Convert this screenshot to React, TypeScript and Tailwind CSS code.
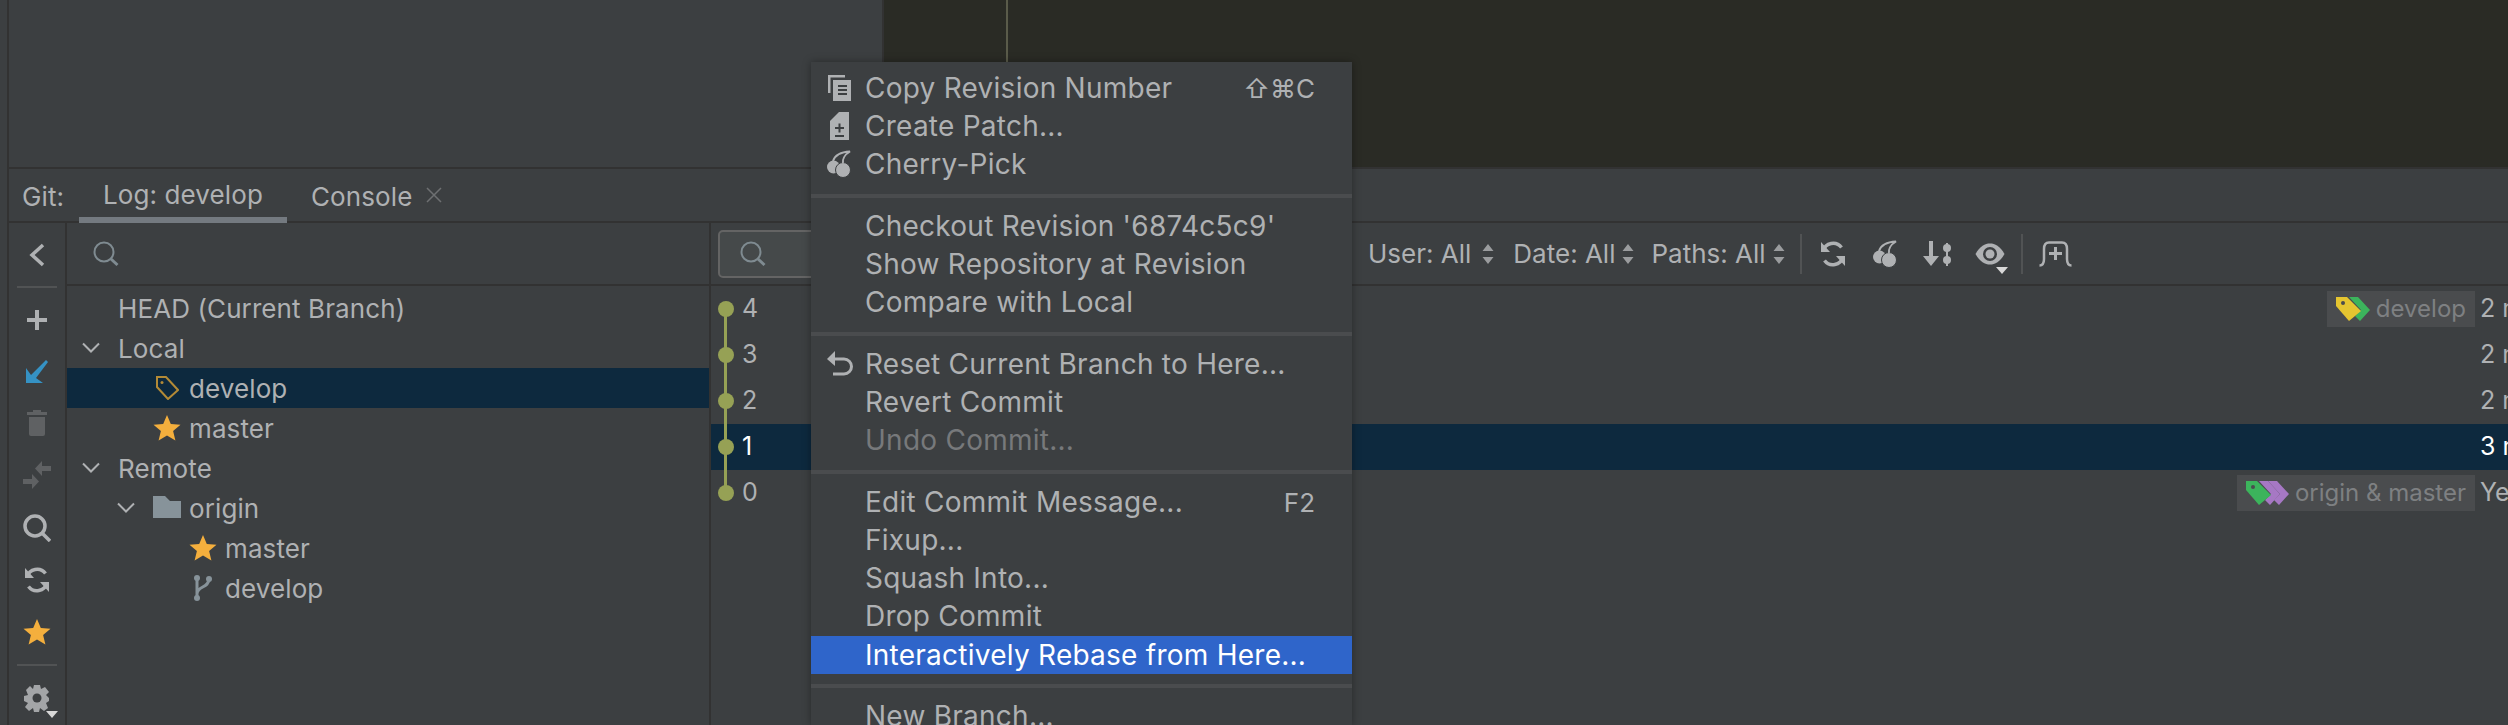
import React from "react";

const FONT = { fontFamily: 'Inter, "Noto Sans", sans-serif' };

function Star({ size = 28 }: { size?: number }) {
  return (
    <svg width={size} height={size} viewBox="0 0 28 28">
      <path d="M14 1 L17.8 10 L27.5 10.8 L20.1 17.1 L22.4 26.5 L14 21.5 L5.6 26.5 L7.9 17.1 L.5 10.8 L10.2 10 Z" fill="#f4af3d" />
    </svg>
  );
}
function Chevron() {
  return (
    <svg width="18" height="12" viewBox="0 0 18 12" fill="none" stroke="#afb1b3" strokeWidth="2" className="shrink-0">
      <path d="M1 1.5 L9 9.5 L17 1.5" />
    </svg>
  );
}
function SearchIcon({ c = "#7f8b91" }: { c?: string }) {
  return (
    <svg width="26" height="26" viewBox="0 0 26 26" fill="none" stroke={c} strokeWidth="2">
      <circle cx="11" cy="11" r="9.5" />
      <path d="M18 18 L24.5 24" strokeWidth="3" />
    </svg>
  );
}
function Refresh({ c = "#afb1b3" }: { c?: string }) {
  return (
    <svg width="26" height="26" viewBox="0 0 26 26" fill="none" stroke={c} strokeWidth="3.5">
      <path d="M3 10 A10.500 10.500 0 0 1 21.500 6.500" />
      <path d="M23 16 A10.500 10.500 0 0 1 4.500 19.500" />
      <path d="M1 1 L1 11 L10 11 Z M25 25 L25 15 L16 15 Z" fill={c} stroke="none" />
    </svg>
  );
}
function Cherry({ c = "#afb1b3" }: { c?: string }) {
  return (
    <svg width="25" height="28" viewBox="0 0 25 28">
      <circle cx="6.500" cy="17" r="6.500" fill={c} />
      <circle cx="16" cy="20" r="7.500" fill={c} stroke="#3c3f41" strokeWidth="1" />
      <path d="M6 11 C8 5 14 2 23 1.500 C17 5 15.500 10 16 13" fill="none" stroke={c} strokeWidth="2" />
    </svg>
  );
}
function Tag({ fill }: { fill: string }) {
  return <path d="M0 0 H11 L25 14 L13 24 L0 9 Z" fill={fill} />;
}
function Updown({ ml }: { ml: string }) {
  return (
    <svg width="12" height="22" viewBox="0 0 12 22" fill="#9a9c9e" className={ml}>
      <path d="M6 1 L11.500 8 H.500 Z M6 21 L11.500 14 H.500 Z" />
    </svg>
  );
}
function Filter({ label, ml, am }: { label: string; ml: string; am: string }) {
  return (
    <div className={`flex items-center ${ml}`}>
      <span className="whitespace-nowrap">{label}</span>
      <Updown ml={am} />
    </div>
  );
}

function Strip() {
  return (
    <div className="w-[58px] shrink-0 flex flex-col items-center border-r-2 border-[#323232]">
      <div className="h-[63px] shrink-0 flex items-center justify-center">
        <svg width="16" height="24" viewBox="0 0 16 24" fill="none" stroke="#afb1b3" strokeWidth="3.500"><path d="M14 2 L3 12 L14 22" /></svg>
      </div>
      <div className="w-[40px] h-[2px] shrink-0 bg-[#515354]" />
      <div className="h-[64px] shrink-0 flex items-center justify-center">
        <svg width="22" height="22" viewBox="0 0 22 22" fill="#afb1b3"><path d="M9 1 h4 v8 h8 v4 h-8 v8 h-4 v-8 h-8 v-4 h8 Z" /></svg>
      </div>
      <div className="h-[40px] shrink-0 flex items-center justify-center">
        <svg width="24" height="24" viewBox="0 0 24 24" fill="#3592c4"><path d="M23 2 L21 0 L6 15 L1 8 V23 H18 L11 18 Z" /></svg>
      </div>
      <div className="h-[62px] shrink-0 flex items-center justify-center">
        <svg width="20" height="26" viewBox="0 0 20 26" fill="#5f6163"><path d="M0 2 H6 V0 H14 V2 H20 V5 H0 Z M2 7 H18 V24 A2 2 0 0 1 16 26 H4 A2 2 0 0 1 2 24 Z" /></svg>
      </div>
      <div className="h-[42px] shrink-0 flex items-center justify-center">
        <svg width="28" height="28" viewBox="0 0 28 28" fill="#5f6163"><path d="M12 7.500 L19 0 V5 H28 V10 H19 V15 Z M16 20.500 L9 13 V18 H0 V23 H9 V28 Z" /></svg>
      </div>
      <div className="h-[64px] shrink-0 flex items-center justify-center">
        <svg width="28" height="28" viewBox="0 0 28 28" fill="none" stroke="#afb1b3" strokeWidth="3.500"><circle cx="12" cy="12" r="10" /><path d="M19 19 L27 27" /></svg>
      </div>
      <div className="h-[40px] shrink-0 flex items-center justify-center"><Refresh /></div>
      <div className="h-[64px] shrink-0 flex items-center justify-center"><Star /></div>
      <div className="w-[40px] h-[2px] shrink-0 bg-[#515354]" />
      <div className="relative flex-1 w-full flex items-start justify-center pt-[18px]">
        <svg width="26" height="28" viewBox="0 0 26 28"><path d="M10 1 H16 L17 5 L21 3 L25 8 L22 11 L25 14 V17 L22 19 L24 24 L20 27 L16 24 L15 28 H10 L9 24 L5 27 L1 23 L4 19 L0 17 V12 L4 11 L2 6 L6 2 L9 5 Z" fill="#a3a5a7" /><circle cx="13" cy="14" r="4.500" fill="#3c3f41" /></svg>
        <svg width="12" height="7" viewBox="0 0 12 7" className="absolute left-[37px] top-[45px]" fill="#d8d8d8"><path d="M0 0 H12 L6 7 Z" /></svg>
      </div>
    </div>
  );
}

function TreeRow({ pad, icon, chev, label, sel }: { pad: string; icon?: React.ReactNode; chev?: boolean; label: string; sel?: boolean }) {
  return (
    <div className={`h-[40px] flex items-center ${pad} ${sel ? "bg-[#0d293e]" : ""}`}>
      {chev && <span className="w-[36px] shrink-0 flex items-center"><Chevron /></span>}
      {icon && <span className="w-[28px] mr-[8px] shrink-0 flex justify-center">{icon}</span>}
      <span className="whitespace-nowrap">{label}</span>
    </div>
  );
}

function Tree() {
  return (
    <div className="w-[644px] shrink-0 flex flex-col border-r-2 border-[#323232]">
      <div className="h-[63px] shrink-0 flex items-center pl-[26px] border-b-2 border-[#323232]"><SearchIcon /></div>
      <div className="pt-[2px]">
        <TreeRow pad="pl-[51px]" label="HEAD (Current Branch)" />
        <TreeRow pad="pl-[15px]" chev label="Local" />
        <TreeRow pad="pl-[86px]" sel label="develop" icon={
          <svg width="24" height="24" viewBox="0 0 24 24" fill="none" stroke="#b38a36" strokeWidth="2"><path d="M2 1 H11 L23 14 L13 23 L2 11 Z" /><circle cx="7" cy="6.500" r="1.500" fill="#b38a36" stroke="none" /></svg>
        } />
        <TreeRow pad="pl-[86px]" label="master" icon={<Star />} />
        <TreeRow pad="pl-[15px]" chev label="Remote" />
        <TreeRow pad="pl-[50px]" chev label="origin" icon={
          <svg width="28" height="24" viewBox="0 0 28 24" fill="#87939a"><path d="M0 0 H12 L17 5 H28 V22 H0 Z" /></svg>
        } />
        <TreeRow pad="pl-[122px]" label="master" icon={<Star />} />
        <TreeRow pad="pl-[122px]" label="develop" icon={
          <svg width="20" height="28" viewBox="0 0 20 28" fill="none" stroke="#87939a" strokeWidth="3"><path d="M4 4 V24 M4 20 C4 12 16 14 16 5" /><circle cx="4" cy="4" r="3" fill="#87939a" stroke="none" /><circle cx="16" cy="5" r="3" fill="#87939a" stroke="none" /><circle cx="4" cy="24" r="3" fill="#87939a" stroke="none" /></svg>
        } />
      </div>
    </div>
  );
}

function Chip({ kind, label }: { kind: "develop" | "origin"; label: string }) {
  return (
    <div className="h-[36px] flex items-center bg-[#4a4c4e] pl-[9px] pr-[9px] text-[#7e8082] text-[24px] tracking-normal">
      {kind === "develop" ? (
        <svg width="34" height="24" viewBox="0 0 34 24" className="mr-[6px]">
          <path d="M13 0 H22 L34 13 L24 24 L19 19 L25 13 Z" fill="#3cb45c" />
          <Tag fill="#e5c530" />
          <circle cx="7" cy="6" r="2" fill="#4a4c4e" />
        </svg>
      ) : (
        <svg width="43" height="24" viewBox="0 0 43 24" className="mr-[6px]">
          <path d="M22 0 H31 L43 13 L33 24 L28 19 L34 13 Z" fill="#a678c4" />
          <path d="M13 0 H22 L34 13 L24 24 L19 19 L25 13 Z" fill="#a678c4" />
          <Tag fill="#3cb45c" />
          <circle cx="7" cy="6" r="2" fill="#4a4c4e" />
        </svg>
      )}
      <span className="whitespace-nowrap">{label}</span>
    </div>
  );
}

function CommitRow({ n, date, sel, first, last, chip }: { n: string; date: string; sel?: boolean; first?: boolean; last?: boolean; chip?: React.ReactNode }) {
  return (
    <div className={`h-[46px] flex items-center ${sel ? "bg-[#0d293e] text-white" : ""}`}>
      <svg width="31" height="46" viewBox="0 0 31 46" className="shrink-0">
        <path d={`M14.500 ${first ? 23 : 0} V${last ? 23 : 46}`} stroke="#96a155" strokeWidth="3" />
        <circle cx="15" cy="23" r="8" fill="#96a155" />
      </svg>
      <span className="flex-1">{n}</span>
      {chip}
      <span className="w-[28px] ml-[5px] shrink-0 overflow-hidden whitespace-nowrap">{date}</span>
    </div>
  );
}

function Log() {
  return (
    <div className="flex-1 min-w-0 flex flex-col overflow-hidden">
      <div className="h-[63px] shrink-0 flex items-center border-b-2 border-[#323232] pl-[7px]">
        <div className="w-[400px] h-[48px] shrink-0 flex items-center pl-[20px] bg-[#45494a] border-2 border-[#646464] rounded-[5px]"><SearchIcon /></div>
        <div className="flex items-center ml-[250px] text-[#afb1b3] text-[26px] tracking-normal">
          <Filter label="User: All" ml="" am="ml-[11px]" />
          <Filter label="Date: All" ml="ml-[19px]" am="ml-[7px]" />
          <Filter label="Paths: All" ml="ml-[17px]" am="ml-[7px]" />
          <div className="w-[2px] h-[40px] shrink-0 bg-[#515354] ml-[15px]" />
          <div className="ml-[18px]"><Refresh /></div>
          <div className="ml-[27px]"><Cherry /></div>
          <svg width="32" height="26" viewBox="0 0 32 26" fill="#afb1b3" className="ml-[25px] shrink-0">
            <path d="M6 0 H10 V15 H16 L8 25 L0 15 H6 Z M23 2 H25 V25 H23 Z" />
            <circle cx="24" cy="7" r="4" /><circle cx="24" cy="19" r="4" />
          </svg>
          <div className="relative ml-[20px] shrink-0">
            <svg width="30" height="22" viewBox="0 0 30 22"><path d="M0.500 11 C5 3 10 0.500 15 0.500 C20 0.500 25 3 29.500 11 C25 19 20 21.500 15 21.500 C10 21.500 5 19 0.500 11 Z" fill="#afb1b3" /><circle cx="15" cy="11" r="7" fill="#3c3f41" /><circle cx="15" cy="11" r="4.500" fill="#afb1b3" /></svg>
            <svg width="12" height="7" viewBox="0 0 12 7" fill="#d8d8d8" className="absolute left-[21px] top-[24px]"><path d="M0 0 H12 L6 7 Z" /></svg>
          </div>
          <div className="w-[2px] h-[40px] shrink-0 bg-[#515354] ml-[16px]" />
          <svg width="33" height="26" viewBox="0 0 33 26" fill="none" stroke="#afb1b3" strokeWidth="2.500" className="ml-[16px] shrink-0">
            <path d="M0.500 24.500 C4 24.500 5 22 5 18 V8 C5 3 7 1.500 10 1.500 H23 C26 1.500 28 3 28 8 V18 C28 22 29 24.500 32.500 24.500" />
            <path d="M16.500 6 V19 M10 12.500 H23" strokeWidth="3" />
          </svg>
        </div>
      </div>
      <div className="text-[#afb1b3] text-[25px] tracking-normal">
        <CommitRow n="4" date="2 m" first chip={<Chip kind="develop" label="develop" />} />
        <CommitRow n="3" date="2 m" />
        <CommitRow n="2" date="2 m" />
        <CommitRow n="1" date="3 m" sel />
        <CommitRow n="0" date="Yesterday" last chip={<Chip kind="origin" label="origin & master" />} />
      </div>
    </div>
  );
}

function MI({ label, icon, sc, dim, hi }: { label: string; icon?: React.ReactNode; sc?: string; dim?: boolean; hi?: boolean }) {
  return (
    <div className={`h-[38px] flex items-center shrink-0 pr-[37px] ${hi ? "bg-[#2f65ca] text-white" : dim ? "text-[#77797b]" : ""}`}>
      <span className="w-[54px] pl-[4px] pr-[1px] flex justify-center shrink-0">{icon}</span>
      <span className="flex-1 whitespace-nowrap">{label}</span>
      {sc && <span className="text-[26px] tracking-normal">{sc}</span>}
    </div>
  );
}
function MSep({ mt, mb }: { mt: string; mb: string }) {
  return <div className={`h-[4px] shrink-0 bg-[#4a4c4e] ${mt} ${mb}`} />;
}

function Menu() {
  return (
    <div className="absolute left-[811px] top-[62px] w-[541px] h-[663px] overflow-hidden bg-[#3c3f41] text-[#afb1b3] text-[28px] tracking-[0.25px] pt-[7px] flex flex-col shadow-[0_0_8px_rgba(0,0,0,0.35)]">
      <MI label="Copy Revision Number" sc="⇧⌘C" icon={
        <svg width="24" height="26" viewBox="0 0 24 26" fill="#afb1b3"><path d="M0 0 H17 V2.500 H2.500 V18 H0 Z M5 5 H23 V26 H5 Z" /><path d="M10 11 H19 M10 15 H19 M10 19 H19" stroke="#3c3f41" strokeWidth="2" /></svg>
      } />
      <MI label="Create Patch..." icon={
        <svg width="20" height="28" viewBox="0 0 20 28" fill="#afb1b3"><path d="M9 0 H19 V28 H0 V9 Z" /><path d="M5 16 H14 M9.500 11.500 V20.500 M5 24 H14" stroke="#3c3f41" strokeWidth="2" /></svg>
      } />
      <MI label="Cherry-Pick" icon={<Cherry />} />
      <MSep mt="mt-[11px]" mb="mb-[9px]" />
      <MI label="Checkout Revision '6874c5c9'" />
      <MI label="Show Repository at Revision" />
      <MI label="Compare with Local" />
      <MSep mt="mt-[11px]" mb="mb-[9px]" />
      <MI label="Reset Current Branch to Here..." icon={
        <svg width="26" height="26" viewBox="0 0 26 26" fill="none" stroke="#afb1b3" strokeWidth="3"><path d="M6 8 H17 A7 7 0 0 1 17 23 H6" /><path d="M8 0 V15 L0 8 Z" fill="#afb1b3" stroke="none" /></svg>
      } />
      <MI label="Revert Commit" />
      <MI label="Undo Commit..." dim />
      <MSep mt="mt-[11px]" mb="mb-[9px]" />
      <MI label="Edit Commit Message..." sc="F2" />
      <MI label="Fixup..." />
      <MI label="Squash Into..." />
      <MI label="Drop Commit" />
      <div className="h-[1px] shrink-0" />
      <MI label="Interactively Rebase from Here..." hi />
      <MSep mt="mt-[10px]" mb="mb-[9px]" />
      <MI label="New Branch..." />
    </div>
  );
}

export default function App() {
  return (
    <div className="relative w-[2508px] h-[725px] overflow-hidden bg-[#3c3f41] flex text-[26px] tracking-[0.1px] text-[#afb1b3]" style={FONT}>
      <div className="w-[9px] shrink-0 border-r-2 border-[#323232]" />
      <div className="flex-1 min-w-0 flex flex-col">
        <div className="h-[169px] shrink-0 flex border-b-2 border-[#323232]">
          <div className="w-[873px] shrink-0" />
          <div className="flex-1 bg-[#2a2b25] pl-[122px] border-l-2 border-[#323232]">
            <div className="w-[2px] h-full bg-[#5a5b4a]" />
          </div>
        </div>
        <div className="h-[54px] shrink-0 flex items-stretch border-b-2 border-[#323232]">
          <div className="pl-[13px] pt-[3px] w-[70px] flex items-center">Git:</div>
          <div className="w-[208px] pt-[3px] -mb-[2px] flex items-center justify-center border-b-[6px] border-[#747a80]">Log: develop</div>
          <div className="pl-[24px] pt-[3px] flex items-center">Console</div>
          <svg width="16" height="16" viewBox="0 0 16 16" fill="none" stroke="#6e7072" strokeWidth="1.500" className="ml-[14px] self-center"><path d="M1 1 L15 15 M15 1 L1 15" /></svg>
        </div>
        <div className="flex-1 min-h-0 flex">
          <Strip />
          <Tree />
          <Log />
        </div>
      </div>
      <Menu />
    </div>
  );
}
